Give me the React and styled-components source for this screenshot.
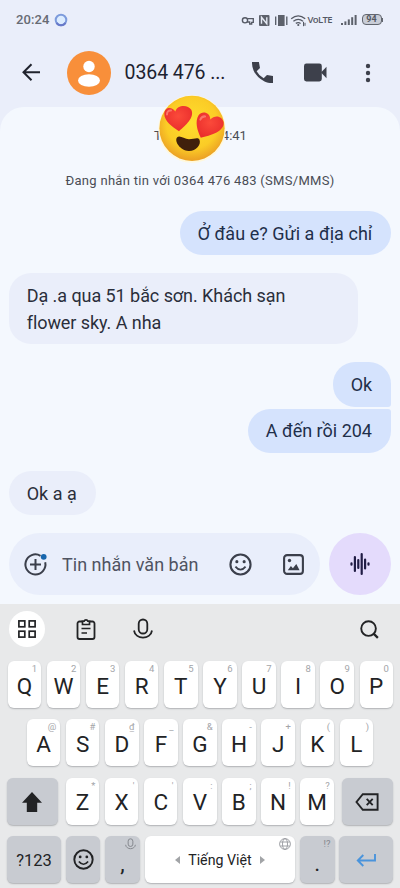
import React from "react";
import styled, { createGlobalStyle } from "styled-components";

const GlobalStyle = createGlobalStyle`
  * { box-sizing: border-box; }
  body { margin: 0; background: #f4f8fe; }
  svg { display: block; flex: none; }
`;

const Phone = styled.main`
  width: 400px;
  height: 888px;
  overflow: hidden;
  display: flex;
  flex-direction: column;
  background: #eaeefa;
  font-family: Roboto, "Noto Sans", sans-serif;
  color: #23283a;
`;

const StatusBar = styled.div`
  height: 38px;
  padding: 1px 17px 0 16px;
  display: flex;
  align-items: center;
  color: #555964;
`;

const Clock = styled.span`
  font-size: 13px;
  font-weight: 500;
  letter-spacing: 0.1px;
  margin-right: 5px;
  color: #676b74;
`;

const StatusIcons = styled.div`
  margin-left: auto;
  display: flex;
  align-items: center;
`;

const Volte = styled.span`
  width: 24px;
  font-family: "Open Sans", sans-serif;
  font-size: 9.5px;
  font-weight: 600;
  letter-spacing: -0.65px;
  margin: 0 9px 0 2px;
`;

const Battery = styled.span`
  width: 20px;
  height: 11px;
  margin-left: 5px;
  border: 1.3px solid #62666f;
  border-radius: 4px;
  background: #c9cdd7;
  font-size: 9px;
  font-weight: 700;
  line-height: 9px;
  text-align: center;
`;

const BatteryTip = styled.span`
  width: 1.5px;
  height: 4px;
  background: #62666f;
`;

const Header = styled.header`
  height: 69px;
  padding: 0 21px;
  display: flex;
  align-items: center;
`;

const Avatar = styled.div`
  width: 44px;
  height: 44px;
  margin-left: 26px;
  border-radius: 50%;
  background: #f88f3a;
`;

const ContactName = styled.h1`
  margin: 0 0 0 13.5px;
  width: 127px;
  font-size: 19.5px;
  font-weight: 400;
  letter-spacing: -0.08px;
  white-space: nowrap;
  color: #1d2230;
`;

const HeaderActions = styled.div`
  flex: 1;
  display: grid;
  grid-template-columns: 52.5px 61px 6px;
  align-items: center;
  color: #3d404b;
`;

const Chat = styled.section`
  position: relative;
  height: 497px;
  padding: 20px 9px 9px;
  border-radius: 24px 24px 0 0;
  background: #f4f8fe;
  display: flex;
  flex-direction: column;
`;

const Timestamp = styled.div`
  display: flex;
  justify-content: center;
  gap: 60px;
  height: 17px;
  font-size: 13px;
  line-height: 17px;
  padding-left: 1px;
  color: #4a4d55;
`;

const Reaction = styled.div`
  position: absolute;
  left: 156.5px;
  top: -13px;
`;

const Notice = styled.p`
  margin: 28px 0 22px;
  height: 17px;
  line-height: 17px;
  text-align: center;
  font-size: 13px;
  letter-spacing: 0.29px;
  white-space: nowrap;
  color: #4a4d55;
`;

const Bubble = styled.div`
  align-self: ${(p) => (p.$sent ? "flex-end" : "flex-start")};
  width: ${(p) => p.$width}px;
  margin-top: ${(p) => p.$gap}px;
  padding: 9.8px 0 8.2px 17.7px;
  border-radius: ${(p) => p.$corners || "22px"};
  background: ${(p) => (p.$sent ? "#d5e3fd" : "#eaeefa")};
  color: ${(p) => (p.$sent ? "#1f2f4a" : "#2a2e3b")};
  font-size: 18px;
  line-height: 26.4px;
  letter-spacing: ${(p) => p.$track || 0}px;
  white-space: nowrap;
`;

const Composer = styled.div`
  margin-top: auto;
  display: flex;
  gap: 9px;
`;

const InputPill = styled.div`
  width: 311px;
  height: 62px;
  padding: 0 16px 0 14px;
  border-radius: 31px;
  background: #e9eefb;
  display: flex;
  align-items: center;
  color: #3b3f4b;
`;

const Placeholder = styled.span`
  flex: 1;
  margin-left: 14px;
  font-size: 18px;
  letter-spacing: 0.02px;
  white-space: nowrap;
  color: #4f5361;
`;

const PillIcons = styled.div`
  display: flex;
  align-items: center;
  gap: 31px;
`;

const VoiceButton = styled.div`
  width: 62px;
  height: 62px;
  border-radius: 50%;
  background: #e4dbfc;
  display: grid;
  place-items: center;
`;

const Keyboard = styled.section`
  height: 284px;
  background: #e8e9ea;
  color: #222325;
`;

const Toolbar = styled.div`
  height: 57px;
  padding: 0 21px 7px 9px;
  display: flex;
  align-items: center;
`;

const ToolCircle = styled.div`
  width: 36px;
  height: 36px;
  margin-right: 31px;
  border-radius: 50%;
  background: #fff;
  display: grid;
  place-items: center;
`;

const ToolSlot = styled.div`
  margin-right: ${(p) => p.$after || 0}px;
  margin-left: ${(p) => p.$push ? "auto" : 0};
`;

const KeyRow = styled.div`
  display: flex;
  gap: ${(p) => p.$gap || 5.7}px;
  height: 47px;
  margin-bottom: 11.3px;
  padding-left: ${(p) => p.$inset}px;
`;

const Key = styled.div`
  position: relative;
  flex: none;
  width: ${(p) => p.$width || 33.4}px;
  margin-left: ${(p) => p.$shift || 0}px;
  border-radius: 6px;
  background: ${(p) => (p.$dim ? "#c8cbd1" : "#fff")};
  box-shadow: 0 1px 1.5px rgba(60, 64, 70, 0.32);
  display: flex;
  align-items: center;
  justify-content: center;
  padding-top: ${(p) => (p.$drop === undefined ? 2 : p.$drop)}px;
  font-size: ${(p) => p.$size || 22.5}px;
  white-space: nowrap;
`;

const Hint = styled.span`
  position: absolute;
  top: 2px;
  right: 4px;
  font-size: 9.5px;
  line-height: 11px;
  color: ${(p) => (p.$dark ? "#85888e" : "#a3a5a9")};
`;

const SpaceLabel = styled.span`
  margin: 0 8.5px;
  font-size: 14.2px;
`;

const Back = () => (
  <svg width="20" height="20" viewBox="0 0.7 20 20" fill="none" stroke="#20232d" strokeWidth="2">
    <path d="M19 10H3M10.5 2 2.5 10l8 8" />
  </svg>
);

const Person = () => (
  <svg width="44" height="44" viewBox="0 0 44 44" fill="#fff">
    <circle cx="22" cy="15.5" r="5.7" />
    <ellipse cx="22" cy="29.5" rx="11" ry="6.2" />
  </svg>
);

const StatusRing = () => (
  <svg width="14" height="14" viewBox="0 0 14 14">
    <circle cx="7" cy="7" r="5.3" fill="#dcecff" stroke="#7d9bdc" strokeWidth="2" />
    <path d="M2.5 9.8A5.3 5.3 0 0 0 11.5 9.8" fill="none" stroke="#6879c8" strokeWidth="2" />
  </svg>
);

const StatusGlyphs = () => (
  <svg width="65" height="14" viewBox="240 12 65 14" fill="none" stroke="#555964">
    <circle cx="244" cy="19.3" r="2.6" strokeWidth="1.4" />
    <path d="M246.5 17.7h5.8v3.6h-1.6v1.7h-2v-2h-2.5" strokeWidth="1.3" />
    <rect x="258" y="14" width="10.5" height="11" rx="1" fill="#5d616b" stroke="none" />
    <path d="M260.5 22.7v-6.5l5.3 6.6v-6.5" stroke="#e6eaf4" strokeWidth="1.4" />
    <rect x="277" y="14" width="6.6" height="11" fill="#5d616b" stroke="none" />
    <path d="M274.7 15.5v8.5M285.8 15.5v8.5" strokeWidth="1.3" />
    <path d="M290.2 17.8q7-5.700 14 0M292.4 20.3q4.800-3.700 9.600 0M294.8 22.4q2.500-1.700 4.800 0" strokeWidth="1.3" />
    <circle cx="297.3" cy="24" r="1.1" fill="#555964" stroke="none" />
    <path d="M302.5 20.8v4.4M304 21.8v3" strokeWidth="1" />
  </svg>
);

const Signal = () => (
  <svg width="16" height="12" viewBox="0 0 16 12" fill="#5d616b">
    <rect x="0" y="9" width="2" height="2" />
    <rect x="3.4" y="7.4" width="2" height="3.6" />
    <rect x="6.8" y="5.4" width="2" height="5.6" />
    <rect x="10.2" y="3.2" width="2" height="7.8" />
    <rect x="13.6" y="1" width="2" height="10" />
  </svg>
);

const Phoneset = () => (
  <svg width="21" height="21" viewBox="3 3 18 18" fill="currentColor">
    <path d="M19.95 21c-2.1 0-4.15-.45-6.2-1.35a18.4 18.4 0 0 1-9.4-9.4C3.45 8.2 3 6.1 3 4.05V3h5.9l.95 5.1-2.85 2.9a14 14 0 0 0 6 6l2.85-2.85L21 15.1V21Z" />
  </svg>
);

const Video = () => (
  <svg width="23" height="19" viewBox="0 0 23 19" fill="currentColor">
    <rect x="0" y="0.5" width="17.8" height="18" rx="2.4" />
    <path d="m17 9.5 5.500-5.800v11.600z" />
  </svg>
);

const More = () => (
  <svg width="6" height="20" viewBox="0 0 6 20" fill="currentColor">
    <circle cx="3" cy="3" r="2.2" />
    <circle cx="3" cy="10" r="2.2" />
    <circle cx="3" cy="17" r="2.2" />
  </svg>
);

const HeartEyes = () => (
  <svg width="70" height="70" viewBox="0 0 70 70">
    <defs>
      <radialGradient id="face" cx="0.5" cy="0.42" r="0.56">
        <stop offset="0" stopColor="#ffdf2e" />
        <stop offset="0.7" stopColor="#fbcc26" />
        <stop offset="1" stopColor="#eda424" />
      </radialGradient>
      <radialGradient id="heart" cx="0.5" cy="0.4" r="0.65">
        <stop offset="0" stopColor="#fb4a3a" />
        <stop offset="1" stopColor="#e92b2b" />
      </radialGradient>
    </defs>
    <circle cx="35" cy="35" r="33.8" fill="#fff8dc" />
    <circle cx="35" cy="34.3" r="32.6" fill="url(#face)" />
    <path d="M20 43.500C22.500 40.500 27 45 32 45.200 37 45.200 41 43 42.500 45.700 44.500 51 38.500 57.500 31.500 57 23.500 56.600 17 47.500 20 43.500Z" fill="#40200c" />
    <g fill="url(#heart)">
      <path d="M22 37.200C15.500 32.500 7.200 27.500 7.300 19.700 7.500 13 15 12 18.300 17.500 20.500 10.500 31 10.500 34.300 15.800 38 23.500 28.500 31.500 22 37.200Z" />
      <path d="M43.800 43.800C40.300 36.500 37.600 27.500 41.600 21.200 45.500 16.200 53.300 18.800 53.300 25.500 58 20.300 65.500 22 66.600 28.500 67.500 37.500 53.500 41.500 43.800 43.800Z" />
    </g>
    <path d="M10 20.500q0-4.300 4-4M43.300 25.600q1.400-3.500 4.800-3.200" fill="none" stroke="#ff8f83" strokeWidth="2" strokeLinecap="round" opacity="0.7" />
  </svg>
);

const AddCircle = () => (
  <svg width="25" height="25" viewBox="0 0 25 25" fill="none" stroke="currentColor" strokeWidth="2">
    <path d="M17.500 3.800A10 10 0 1 0 22.200 10.300M12.500 7v11M7 12.500h11" />
    <circle cx="20.700" cy="4.800" r="2.900" fill="#1866ad" stroke="none" />
  </svg>
);

const Smile = ({ size = 23 }) => (
  <svg width={size} height={size} viewBox="0 0 24 24" fill="none" stroke="currentColor" strokeWidth="2.200">
    <circle cx="12" cy="12" r="10.500" />
    <path d="M6.700 14.200q5.300 6.400 10.600 0" strokeWidth="1.900" />
    <circle cx="8.200" cy="9" r="1.600" fill="currentColor" stroke="none" />
    <circle cx="15.800" cy="9" r="1.600" fill="currentColor" stroke="none" />
  </svg>
);

const Picture = () => (
  <svg width="21" height="21" viewBox="0 0 21 21">
    <rect x="1.100" y="1.100" width="18.800" height="18.800" rx="3" fill="none" stroke="currentColor" strokeWidth="2.100" />
    <circle cx="6.500" cy="6.500" r="1.700" fill="currentColor" />
    <path d="M4.800 16.200 7.900 12l2 2.300 3.400-4.300 3.300 6.200z" fill="currentColor" />
  </svg>
);

const Wave = () => (
  <svg width="20" height="24" viewBox="0 0 20 24" stroke="#211d45" strokeWidth="2.200" strokeLinecap="round">
    <path d="M1.500 11.300v1.400M4.900 5v14M8.300 8v8M11.700 2v20M15.100 7.500v9M18.500 11.300v1.400" />
  </svg>
);

const Grid = () => (
  <svg width="18" height="18" viewBox="0 0 18 18" fill="none" stroke="currentColor" strokeWidth="1.700">
    <rect x="0.900" y="0.900" width="5.900" height="5.900" />
    <rect x="11.200" y="0.900" width="5.900" height="5.900" />
    <rect x="0.900" y="11.200" width="5.900" height="5.900" />
    <rect x="11.200" y="11.200" width="5.900" height="5.900" />
  </svg>
);

const Clipboard = () => (
  <svg width="20" height="22" viewBox="0 0 20 22" fill="none" stroke="currentColor" strokeWidth="1.800">
    <path d="M6 3.500H3.500a2 2 0 0 0-2 2V19a2 2 0 0 0 2 2h13a2 2 0 0 0 2-2V5.500a2 2 0 0 0-2-2H14" />
    <path d="M6.500 3.200h1.600a2 2 0 0 1 3.800 0h1.600v3.300h-7zM5.500 10.500h9M5.500 15h5.500" strokeWidth="1.700" />
  </svg>
);

const Mic = ({ width = 20, height = 22 }) => (
  <svg width={width} height={height} viewBox="0 0 20 22" fill="none" stroke="currentColor" strokeWidth="1.800">
    <rect x="5.700" y="1.500" width="8.600" height="14" rx="4.300" />
    <path d="M1 12.500c1.500 9.500 16.500 9.500 18 0" />
  </svg>
);

const Search = () => (
  <svg width="19" height="19" viewBox="0 0 20 20" fill="none" stroke="currentColor" strokeWidth="2">
    <circle cx="9" cy="9" r="7.700" />
    <path d="m14.300 14.300 4.500 4.500" strokeWidth="2.400" />
  </svg>
);

const Shift = () => (
  <svg width="20" height="20" viewBox="0 0 20 20" fill="currentColor">
    <path d="M10 0 20 10.800h-4.800V20H4.800v-9.200H0z" />
  </svg>
);

const Backspace = () => (
  <svg width="24" height="18" viewBox="0 0 24 18" fill="none" stroke="currentColor" strokeWidth="1.900">
    <path d="M7.800 1.200H22.600v15.600H7.800L1.500 9zM11.700 5.900l6 6.200M17.700 5.900l-6 6.200" />
  </svg>
);

const Enter = () => (
  <svg width="20" height="14" viewBox="0 0 20 14" fill="none" stroke="#4a94dc" strokeWidth="1.900">
    <path d="M19 1v6.500H2M7.300 2 1.800 7.500l5.500 5.500" />
  </svg>
);

const Globe = () => (
  <svg width="12" height="12" viewBox="0 0 12 12" fill="none" stroke="#96999e" strokeWidth="0.900">
    <circle cx="6" cy="6" r="5.400" />
    <ellipse cx="6" cy="6" rx="2.500" ry="5.400" />
    <path d="M1.300 4h9.400M1.300 8h9.400" />
  </svg>
);

const Triangle = ({ flip }) => (
  <svg width="5" height="8" viewBox="0 0 5 8" fill="#a2a4a7">
    <path d={flip ? "M0 0l5 4-5 4z" : "M5 0 0 4l5 4z"} />
  </svg>
);

const topRow = ["Q1", "W2", "E3", "R4", "T5", "Y6", "U7", "I8", "O9", "P0"];
const homeRow = ["A@", "S#", "D₫", "F_", "G&", "H-", "J+", "K(", "L)"];
const lowRow = ["Z*", "X'", "C'", "V:", "B;", "N!", "M?"];

const Letters = ({ keys }) =>
  keys.map((k) => (
    <Key key={k}>
      {k[0]}
      <Hint>{k[1]}</Hint>
    </Key>
  ));

export default function App() {
  return (
    <Phone>
      <GlobalStyle />
      <StatusBar>
        <Clock>20:24</Clock>
        <StatusRing />
        <StatusIcons>
          <StatusGlyphs />
          <Volte>VoLTE</Volte>
          <Signal />
          <Battery>94</Battery>
          <BatteryTip />
        </StatusIcons>
      </StatusBar>
      <Header>
        <Back />
        <Avatar><Person /></Avatar>
        <ContactName>0364 476 ...</ContactName>
        <HeaderActions>
          <Phoneset />
          <Video />
          <More />
        </HeaderActions>
      </Header>
      <Chat>
        <Timestamp>
          <span>T</span>
          <span>4:41</span>
        </Timestamp>
        <Reaction><HeartEyes /></Reaction>
        <Notice>Đang nhắn tin với 0364 476 483 (SMS/MMS)</Notice>
        <Bubble $sent $width={211} $gap={0} $track={0.03}>Ở đâu e? Gửi a địa chỉ</Bubble>
        <Bubble $width={349} $gap={18} $track={-0.06}>
          Dạ .a qua 51 bắc sơn. Khách sạn<br />flower sky. A nha
        </Bubble>
        <Bubble $sent $width={58} $gap={18} $corners="22px 22px 3px 22px">Ok</Bubble>
        <Bubble $sent $width={143} $gap={2} $corners="22px 3px 22px 22px">A đến rồi 204</Bubble>
        <Bubble $width={87} $gap={18}>Ok a ạ</Bubble>
        <Composer>
          <InputPill>
            <AddCircle />
            <Placeholder>Tin nhắn văn bản</Placeholder>
            <PillIcons>
              <Smile />
              <Picture />
            </PillIcons>
          </InputPill>
          <VoiceButton><Wave /></VoiceButton>
        </Composer>
      </Chat>
      <Keyboard>
        <Toolbar>
          <ToolCircle><Grid /></ToolCircle>
          <ToolSlot $after={37}><Clipboard /></ToolSlot>
          <ToolSlot><Mic /></ToolSlot>
          <ToolSlot $push><Search /></ToolSlot>
        </Toolbar>
        <KeyRow $inset={7.8}><Letters keys={topRow} /></KeyRow>
        <KeyRow $inset={27}><Letters keys={homeRow} /></KeyRow>
        <KeyRow $inset={7}>
          <Key $dim $width={50.5} $drop={2}><Shift /></Key>
          <Key $shift={2.7}>Z<Hint>*</Hint></Key>
          <Letters keys={lowRow.slice(1)} />
          <Key $dim $width={51} $shift={2.5} $drop={2}><Backspace /></Key>
        </KeyRow>
        <KeyRow $inset={7} $gap={4.9}>
          <Key $dim $width={54} $size={16.5}>?123</Key>
          <Key $dim $width={34.5} $drop={1}><Smile size={21} /></Key>
          <Key $dim $width={34.5} $drop={8}>,<Hint $dark><Mic width={11} height={12} /></Hint></Key>
          <Key $width={150.5}>
            <Triangle />
            <SpaceLabel>Tiếng Việt</SpaceLabel>
            <Triangle flip />
            <Hint><Globe /></Hint>
          </Key>
          <Key $dim $width={34.5} $drop={8}>.<Hint $dark>!?</Hint></Key>
          <Key $dim $width={54} $drop={1}><Enter /></Key>
        </KeyRow>
      </Keyboard>
    </Phone>
  );
}
